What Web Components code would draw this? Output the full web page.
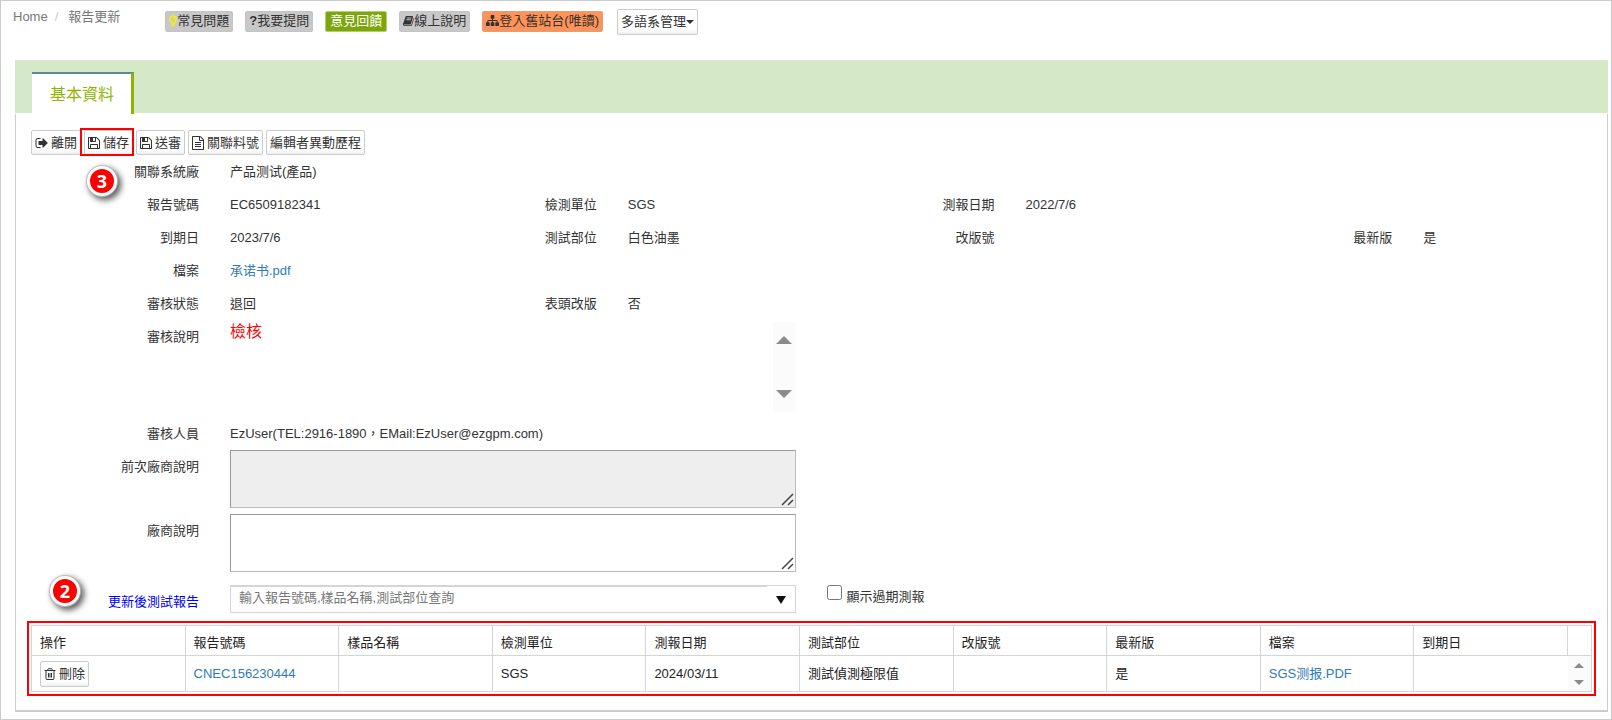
<!DOCTYPE html>
<html lang="zh-Hant">
<head>
<meta charset="utf-8">
<meta name="viewport" content="width=device-width, initial-scale=1">
<title>報告更新</title>
<style>
  html { height: 100%; }
  body {
    margin: 0; min-height: 100%; box-sizing: border-box;
    display: flex; flex-direction: column;
    border: 1px solid #ccc; background: #fff; color: #333;
    font: 13px/20px "Liberation Sans", "Noto Sans CJK TC", sans-serif;
  }
</style>
</head>
<body>
<report-topbar></report-topbar>
<report-panel heading="基本資料">
  <report-toolbar></report-toolbar>
  <report-form></report-form>
  <report-table></report-table>
</report-panel>

<script>
const define = (name, html, setup) => {
  const tpl = document.createElement('template');
  tpl.innerHTML = html;
  customElements.define(name, class extends HTMLElement {
    constructor() {
      super();
      this.attachShadow({ mode: 'open' }).append(tpl.content.cloneNode(true));
    }
    connectedCallback() { if (setup) setup(this, this.shadowRoot); }
  });
};

const ICONS = {
  bulb: ['0 0 9 13', '<path fill="none" stroke="currentColor" stroke-width="1.7" d="M2.9 8.6C2.900 7 1 6.300 1 4.200 1 2.200 2.600 1 4.500 1S8 2.200 8 4.200C8 6.300 6.100 7 6.100 8.600M4.500 3c.9 0 1.400.5 1.400 1.200"/><path fill="currentColor" d="M2.3 8.400h4.400v1.400H2.3zM2.3 10.100h4.400v1.200H2.3zM3.200 11.500h2.600v1.200H3.200z"/>'],
  book: ['0 128 1664 1536', '<path fill="currentColor" d="M1639 478q40 57 18 129l-275 906q-19 64-76.500 107.500t-122.500 43.500h-923q-77 0-148.500-53.500t-99.500-131.500q-24-67-2-127 0-4 3-27t4-37q1-8-3-21.500t-3-19.500q2-11 8-21t16.500-23.500 16.500-23.500q23-38 45-91.500t30-91.500q3-10 .5-30t-.5-28q3-11 17-28t17-23q21-36 42-92t25-90q1-9-2.500-32t.5-28q4-13 22-30.500t22-22.500q19-26 42.500-84.500t27.500-96.500q1-8-3-25.500t-2-26.500q2-8 9-18t18-23 17-21q8-12 16.500-30.500t15-35 16-36 19.500-32 26.500-23.500 36-11.500 47.500 5.500l-1 3q38-9 51-9h761q74 0 114 56t18 130l-274 906q-36 119-71.500 153.500t-128.500 34.500h-869q-27 0-38 15-11 16-1 43 24 70 144 70h923q29 0 56-15.500t35-41.500l300-987q7-22 5-57 38 15 59 43zm-1064 2q-4 13 2 22.500t20 9.500h608q13 0 25.500-9.500t16.500-22.500l21-64q4-13-2-22.500t-20-9.500h-608q-13 0-25.500 9.500t-16.500 22.500zm-83 256q-4 13 2 22.500t20 9.500h608q13 0 25.500-9.500t16.500-22.500l21-64q4-13-2-22.500t-20-9.500h-608q-13 0-25.500 9.500t-16.500 22.500z"/>'],
  sitemap: ['0 0 1792 1792', '<path fill="currentColor" d="M1792 1248v320q0 40-28 68t-68 28h-320q-40 0-68-28t-28-68v-320q0-40 28-68t68-28h96v-192h-512v192h96q40 0 68 28t28 68v320q0 40-28 68t-68 28h-320q-40 0-68-28t-28-68v-320q0-40 28-68t68-28h96v-192h-512v192h96q40 0 68 28t28 68v320q0 40-28 68t-68 28h-320q-40 0-68-28t-28-68v-320q0-40 28-68t68-28h96v-192q0-52 38-90t90-38h512v-192h-96q-40 0-68-28t-28-68v-320q0-40 28-68t68-28h320q40 0 68 28t28 68v320q0 40-28 68t-68 28h-96v192h512q52 0 90 38t38 90v192h96q40 0 68 28t28 68z"/>'],
  exit: ['0 256 1664 1280', '<path fill="currentColor" d="M704 1440q0 4 1 20t.5 26.500-3 23.500-10 19.500-20.500 6.500h-320q-119 0-203.500-84.500t-84.500-203.500v-704q0-119 84.500-203.500t203.500-84.500h320q13 0 22.500 9.500t9.500 22.500q0 4 1 20t.5 26.500-3 23.500-10 19.500-20.500 6.500h-320q-66 0-113 47t-47 113v704q0 66 47 113t113 47h312l11.500 1 11.500 3 8 5.500 7 9 2 13.500zm928-544q0 26-19 45l-544 544q-19 19-45 19t-45-19-19-45v-288h-448q-26 0-45-19t-19-45v-384q0-26 19-45t45-19h448v-288q0-26 19-45t45-19 45 19l544 544q19 19 19 45z"/>'],
  save: ['128 128 1536 1536', '<path fill="currentColor" d="M512 1536h768v-384h-768v384zm896 0h128v-896q0-14-10-38.500t-20-34.500l-281-281q-10-10-34-20t-39-10v416q0 40-28 68t-68 28h-576q-40 0-68-28t-28-68v-416h-128v1280h128v-416q0-40 28-68t68-28h832q40 0 68 28t28 68v416zm-384-928v-320q0-13-9.500-22.500t-22.500-9.500h-192q-13 0-22.500 9.500t-9.500 22.500v320q0 13 9.500 22.500t22.500 9.500h192q13 0 22.500-9.500t9.500-22.500zm640 32v928q0 40-28 68t-68 28h-1344q-40 0-68-28t-28-68v-1344q0-40 28-68t68-28h928q40 0 88 20t76 48l280 280q28 28 48 76t20 88z"/>'],
  file: ['128 0 1536 1792', '<path fill="currentColor" d="M1596 380q28 28 48 76t20 88v1152q0 40-28 68t-68 28h-1344q-40 0-68-28t-28-68v-1600q0-40 28-68t68-28h896q40 0 88 20t76 48zm-444-244v376h376q-10-29-22-41l-313-313q-12-12-41-22zm384 1528v-1024h-416q-40 0-68-28t-28-68v-416h-768v1536h1280zm-1024-864q0-14 9-23t23-9h704q14 0 23 9t9 23v64q0 14-9 23t-23 9h-704q-14 0-23-9t-9-23v-64zm736 224q14 0 23 9t9 23v64q0 14-9 23t-23 9h-704q-14 0-23-9t-9-23v-64q0-14 9-23t23-9h704zm0 256q14 0 23 9t9 23v64q0 14-9 23t-23 9h-704q-14 0-23-9t-9-23v-64q0-14 9-23t23-9h704z"/>'],
  trash: ['0 0 12 12', '<path fill="none" stroke="currentColor" d="M.5 2.500h11M3.800 2.500V1.500q0-.8.8-.8h2.800q.8 0 .8.800v1M2 2.800v7.700q0 1 1 1h6q1 0 1-1V2.800M4.500 5v4.500M6 5v4.500M7.500 5v4.500"/>'],
  up: ['0 0 16 8', '<path fill="#8b8b8b" d="M8 0l8 8H0z"/>'],
  down: ['0 0 16 8', '<path fill="#8b8b8b" d="M0 0h16L8 8z"/>'],
  caret: ['0 0 8 4', '<path fill="currentColor" d="M0 0h8L4 4z"/>'],
  pick: ['0 0 10 8', '<path fill="#111" d="M0 0h10L5 8z"/>']
};

define('ui-icon', `<style>
  :host { display: inline-flex; flex: none; width: 12px; height: 12px; }
  svg { width: 100%; height: 100%; }
</style><svg aria-hidden="true"></svg>`, (el, root) => {
  const [box, body] = ICONS[el.getAttribute('name')];
  const svg = root.querySelector('svg');
  svg.setAttribute('viewBox', box);
  svg.innerHTML = body;
});

/* Small push button; the tone attribute picks its colouring. */
define('ui-button', `<style>
  :host { display: inline-flex; }
  button {
    display: flex; align-items: center; gap: var(--gap, 0px); box-sizing: border-box;
    height: var(--height, 26px); padding: 0 3px; white-space: nowrap; color: #333;
    font: inherit; border: 1px solid #ccc; border-radius: 2px;
    background: linear-gradient(#fff 80%, #f0f0f0);
  }
  :host([tone]) button { height: 21px; padding-bottom: 2px; border-color: #c4c4c4; background: #c8c8c8; }
  :host([tone=green]) button { padding: 0 4px 2px; color: #fff; border-color: #b5cf6e; background: #7da60c; }
  :host([tone=orange]) button { border-color: #d8a184; background: #ff9257; }
</style><button type="button"><slot></slot></button>`);

define('step-badge', `<style>
  :host {
    position: absolute; display: flex; align-items: center; justify-content: center;
    box-sizing: border-box; width: 30px; height: 30px; border-radius: 50%;
    border: 3px solid #fff; background: #f00; color: #fff;
    font: bold 18px/20px "Noto Sans", sans-serif;
    box-shadow: 0 0 1px 1px #bbb, 3px 3px 6px 1px #555;
  }
</style><slot></slot>`);

define('scroll-rail', `<style>
  :host { display: flex; flex-direction: column; justify-content: space-between; align-items: center; background: #fbfbfb; }
  button { display: flex; border: 0; padding: 0; background: none; }
  ui-icon { width: var(--arrow-w, 16px); height: var(--arrow-h, 8px); }
</style>
<button type="button" aria-label="向上捲動"><ui-icon name="up"></ui-icon></button>
<button type="button" aria-label="向下捲動"><ui-icon name="down"></ui-icon></button>`);

define('report-topbar', `<style>
  :host { display: flex; align-items: flex-start; height: 59px; padding-left: 12px; box-sizing: border-box; }
  ol { display: flex; margin: 6px 45px 0 0; padding: 0; list-style: none; color: #777; }
  li + li::before { content: "/"; color: #ccc; padding: 0 10px 0 7px; }
  a { color: inherit; text-decoration: none; }
  nav.actions { display: flex; gap: 12px; margin: 10px 14px 0 0; }
  .bulb { width: 8px; height: 12px; color: #f5f500; }
  .book { width: 11px; }
  .wide { width: 13px; height: 13px; }
  .menu { margin-top: 8px; }
  .caret { width: 8px; height: 4px; }
</style>
<ol><li><a href="#">Home</a></li><li>報告更新</li></ol>
<nav class="actions">
  <ui-button tone="grey"><ui-icon class="bulb" name="bulb"></ui-icon>常見問題</ui-button>
  <ui-button tone="grey"><b>?</b>我要提問</ui-button>
  <ui-button tone="green">意見回饋</ui-button>
  <ui-button tone="grey"><ui-icon class="book" name="book"></ui-icon>線上說明</ui-button>
  <ui-button tone="orange"><ui-icon class="wide" name="sitemap"></ui-icon>登入舊站台(唯讀)</ui-button>
</nav>
<ui-button class="menu">多語系管理<ui-icon class="caret" name="caret"></ui-icon></ui-button>`);

define('report-panel', `<style>
  :host { display: flex; flex-direction: column; flex: 1; margin: 0 3px 7px 14px; }
  header { display: flex; align-items: flex-end; height: 53px; padding-left: 17px; background: #d5e8c8; }
  h1 {
    margin: 0 0 -1px; box-sizing: border-box; height: 42px; padding: 9px 17px 0 18px;
    font-size: 16px; line-height: 24px; font-weight: normal; color: #8fb400; background: #fff;
    border-top: 2px solid #5b8a9b; border-right: 3px solid #8fb400;
  }
  section { margin-top: 1px; flex: 1; padding: 16px 0 10px; border: 1px solid #ccc; border-width: 0 1px 2px; }
</style>
<header><h1></h1></header>
<section><slot></slot></section>`, (el, root) => {
  root.querySelector('h1').textContent = el.getAttribute('heading');
});

define('report-toolbar', `<style>
  :host { display: flex; gap: 3px; padding-left: 15px; --gap: 3px; --height: 25px; }
  .marked { position: relative; display: flex; }
  .marked::after { content: ""; position: absolute; inset: -2px -1px -1px -4px; border: 2px solid #f00; pointer-events: none; }
  step-badge { top: 36px; left: 3px; }
  .exit { width: 13px; height: 10px; }
  .file { height: 14px; }
</style>
<ui-button><ui-icon class="exit" name="exit"></ui-icon>離開</ui-button>
<div class="marked"><ui-button><ui-icon name="save"></ui-icon>儲存</ui-button><step-badge>3</step-badge></div>
<ui-button><ui-icon name="save"></ui-icon>送審</ui-button>
<ui-button><ui-icon class="file" name="file"></ui-icon>關聯料號</ui-button>
<ui-button>編輯者異動歷程</ui-button>`);

/* One caption and its value; the form's grid places it in a column. */
define('report-field', `<style>
  :host { display: flex; column-gap: 31px; min-height: 33px; box-sizing: border-box; }
  .caption { flex: none; width: 183px; text-align: right; line-height: 33px; }
  .value { flex: 1; min-width: 0; line-height: 33px; }
</style>
<span class="caption"></span><div class="value"><slot></slot></div>`, (el, root) => {
  root.querySelector('.caption').textContent = el.getAttribute('label');
});

define('report-form', `<style>
  :host { display: grid; grid-template-columns: repeat(4, 1fr); }
  .c1 { grid-column: 1; } .c2 { grid-column: 2; } .c3 { grid-column: 3; } .c4 { grid-column: 4; }
  .half { grid-column: 1 / 3; margin-right: 16px; }
  a { color: #337ab7; text-decoration: none; }
  .note { display: flex; height: 90px; margin: 2px 0 5px; }
  .note p { flex: 1; margin: 0; color: #f00; font-size: 16px; line-height: 20px; }
  scroll-rail { width: 23px; box-sizing: border-box; padding: 14px 0; }
  .row { display: flex; column-gap: 31px; align-items: flex-start; }
  label.caption { flex: none; width: 183px; text-align: right; line-height: 33px; }
  textarea {
    flex: 1; box-sizing: border-box; height: 58px; margin: 0 0 6px; resize: vertical; font: inherit;
    border: 1px solid; border-color: #999 #bbb #bbb #999; background: #fff;
  }
  textarea[readonly] { background: #eee; }
  textarea::-webkit-resizer {
    background: url("data:image/svg+xml,%3Csvg xmlns='http://www.w3.org/2000/svg' viewBox='0 0 15 15'%3E%3Cpath d='M2 13L13 2M8 13l5-5' fill='none' stroke='%23444' stroke-width='1.500'/%3E%3C/svg%3E") center / 100% 100% no-repeat;
  }
  .search { position: relative; margin-top: 7px; min-height: 36px; }
  .search .caption { color: #00f; }
  .combo { flex: 1; display: flex; box-sizing: border-box; height: 28px; border: 1px solid #d5d5d5; }
  .combo input {
    flex: 1; min-width: 0; padding: 0 8px 3px; font: inherit; color: #333; background: #fff;
    border: 0; border-top: 1px solid #d5d5d5; outline: 0;
  }
  .combo input::placeholder { color: #777; opacity: 1; }
  .combo button { width: 28px; border: 0; padding: 0; background: none; }
  .combo ui-icon { width: 10px; height: 8px; }
  .check { display: flex; align-items: flex-start; margin-top: 7px; padding-left: 15px; line-height: 24px; }
  .check input { width: 15px; height: 15px; margin: 0 5px 0 0; }
  step-badge { top: -9px; left: 34px; }
</style>
<report-field class="c1" label="關聯系統廠">产品测试(產品)</report-field>
<report-field class="c1" label="報告號碼">EC6509182341</report-field>
<report-field class="c2" label="檢測單位">SGS</report-field>
<report-field class="c3" label="測報日期">2022/7/6</report-field>
<report-field class="c1" label="到期日">2023/7/6</report-field>
<report-field class="c2" label="測試部位">白色油墨</report-field>
<report-field class="c3" label="改版號"></report-field>
<report-field class="c4" label="最新版">是</report-field>
<report-field class="c1" label="檔案"><a href="#">承诺书.pdf</a></report-field>
<report-field class="c1" label="審核狀態">退回</report-field>
<report-field class="c2" label="表頭改版">否</report-field>
<report-field class="half" label="審核說明"><div class="note"><p>檢核</p><scroll-rail></scroll-rail></div></report-field>
<report-field class="half" label="審核人員">EzUser(TEL:2916-1890，EMail:EzUser@ezgpm.com)</report-field>
<div class="row half"><label class="caption" for="prev">前次廠商說明</label><textarea id="prev" readonly></textarea></div>
<div class="row half"><label class="caption" for="note">廠商說明</label><textarea id="note"></textarea></div>
<div class="row half search"><label class="caption" for="report">更新後測試報告</label>
  <div class="combo"><input id="report" type="text" placeholder="輸入報告號碼,樣品名稱,測試部位查詢"><button type="button" aria-label="展開選單"><ui-icon name="pick"></ui-icon></button></div>
  <step-badge>2</step-badge></div>
<label class="check"><input type="checkbox">顯示過期測報</label>`);

define('report-table', `<style>
  :host { display: block; margin: 0 11px; padding: 2px; border: 2px solid #f00; }
  table { width: 100%; border-collapse: collapse; table-layout: fixed; color: #222; }
  th, td { border: 1px solid #d5d5d5; padding: 0 8px; text-align: left; font-weight: normal; }
  th { height: 30px; padding-top: 4px; box-sizing: border-box; }
  td { height: 36px; box-sizing: border-box; }
  th:last-child { width: 24px; }
  td:last-child { padding: 0; border-left: 0; background: #fbfbfb; }
  td:nth-last-child(2) { border-right: 0; }
  a { color: #337ab7; text-decoration: none; }
  ui-button { --gap: 3px; display: flex; }
  scroll-rail { height: 22px; --arrow-w: 10px; --arrow-h: 5px; }
</style>
<table>
  <thead><tr><th>操作</th><th>報告號碼</th><th>樣品名稱</th><th>檢測單位</th><th>測報日期</th><th>測試部位</th><th>改版號</th><th>最新版</th><th>檔案</th><th>到期日</th><th></th></tr></thead>
  <tbody><tr>
    <td><ui-button><ui-icon name="trash"></ui-icon>刪除</ui-button></td>
    <td><a href="#">CNEC156230444</a></td><td></td><td>SGS</td><td>2024/03/11</td><td>測試偵測極限值</td><td></td><td>是</td>
    <td><a href="#">SGS测报.PDF</a></td><td></td><td><scroll-rail></scroll-rail></td>
  </tr></tbody>
</table>`);
</script>
</body>
</html>
